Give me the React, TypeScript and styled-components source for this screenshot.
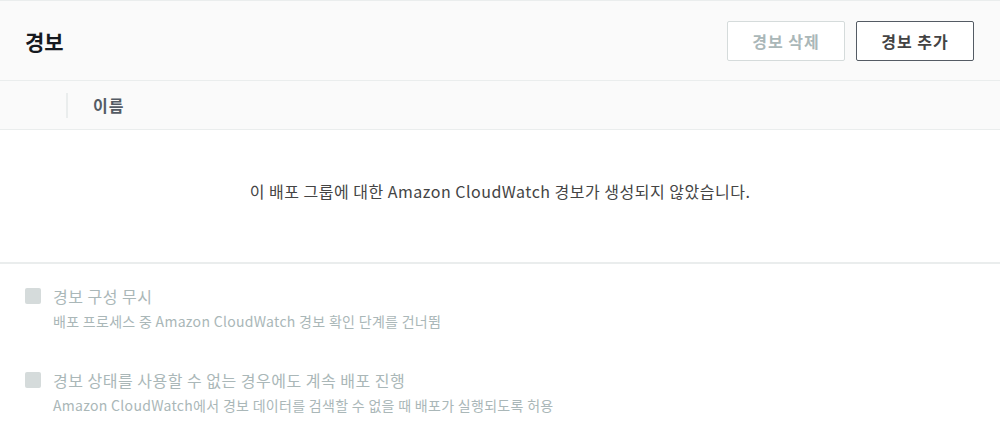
import styled, { createGlobalStyle } from "styled-components";

const GlobalStyle = createGlobalStyle`
  body {
    margin: 0;
    background: #ffffff;
    font-family: "Noto Sans CJK KR", "Noto Sans", sans-serif;
    color: #16191f;
  }
`;

const Panel = styled.section`
  width: 1000px;
  border-top: 1px solid #eaeded;
`;

const Header = styled.div`
  display: flex;
  align-items: center;
  justify-content: space-between;
  height: 79px;
  padding: 0 26px 0 25px;
  background: #fafafa;
  border-bottom: 1px solid #eaeded;
`;

const Title = styled.h2`
  margin: 0;
  font-size: 21px;
  font-weight: 700;
  color: #16191f;
`;

const Actions = styled.div`
  display: flex;
  gap: 11px;
`;

const Button = styled.button<{ $disabled?: boolean }>`
  width: 118px;
  height: 40px;
  border-radius: 2px;
  font-family: inherit;
  font-size: 16px;
  letter-spacing: 1px;
  font-weight: 700;
  background: #ffffff;
  border: 1px solid ${(p) => (p.$disabled ? "#d5dbdb" : "#545b64")};
  color: ${(p) => (p.$disabled ? "#aab7b8" : "#444")};
  cursor: ${(p) => (p.$disabled ? "default" : "pointer")};
`;

const ColumnRow = styled.div`
  display: flex;
  align-items: center;
  height: 48px;
  background: #fafafa;
  border-bottom: 1px solid #eaeded;
`;

const ColumnDivider = styled.span`
  width: 2px;
  height: 25px;
  margin-left: 66px;
  background: #eaeded;
`;

const ColumnLabel = styled.span`
  margin-left: 25px;
  font-size: 16px;
  letter-spacing: 1px;
  font-weight: 700;
  color: #545b64;
`;

const Empty = styled.div`
  display: flex;
  align-items: center;
  justify-content: center;
  height: 134px;
  padding-bottom: 10px;
  box-sizing: border-box;
  font-size: 16px;
  letter-spacing: 0.5px;
  color: #444;
  border-bottom: 2px solid #eaeded;
`;

const Options = styled.div`
  display: flex;
  flex-direction: column;
  gap: 38px;
  padding: 21px 25px 0;
`;

const Option = styled.label`
  display: grid;
  grid-template-columns: 16px 1fr;
  column-gap: 12px;
  row-gap: 4px;
`;

const Box = styled.span`
  width: 16px;
  height: 16px;
  margin-top: 3px;
  border-radius: 2px;
  background: #d5dbdb;
`;

const OptionTitle = styled.span`
  font-size: 16px;
  line-height: 22px;
  letter-spacing: 0.5px;
  color: #aab7b8;
`;

const OptionHint = styled.span`
  grid-column: 2;
  font-size: 14px;
  line-height: 20px;
  letter-spacing: 0.3px;
  color: #aab7b8;
`;

const options = [
  {
    title: "경보 구성 무시",
    hint: "배포 프로세스 중 Amazon CloudWatch 경보 확인 단계를 건너뜀",
  },
  {
    title: "경보 상태를 사용할 수 없는 경우에도 계속 배포 진행",
    hint: "Amazon CloudWatch에서 경보 데이터를 검색할 수 없을 때 배포가 실행되도록 허용",
  },
];

export default function App() {
  return (
    <>
      <GlobalStyle />
      <Panel>
        <Header>
          <Title>경보</Title>
          <Actions>
            <Button $disabled>경보 삭제</Button>
            <Button>경보 추가</Button>
          </Actions>
        </Header>
        <ColumnRow>
          <ColumnDivider />
          <ColumnLabel>이름</ColumnLabel>
        </ColumnRow>
        <Empty>이 배포 그룹에 대한 Amazon CloudWatch 경보가 생성되지 않았습니다.</Empty>
        <Options>
          {options.map((o) => (
            <Option key={o.title}>
              <Box />
              <OptionTitle>{o.title}</OptionTitle>
              <OptionHint>{o.hint}</OptionHint>
            </Option>
          ))}
        </Options>
      </Panel>
    </>
  );
}
